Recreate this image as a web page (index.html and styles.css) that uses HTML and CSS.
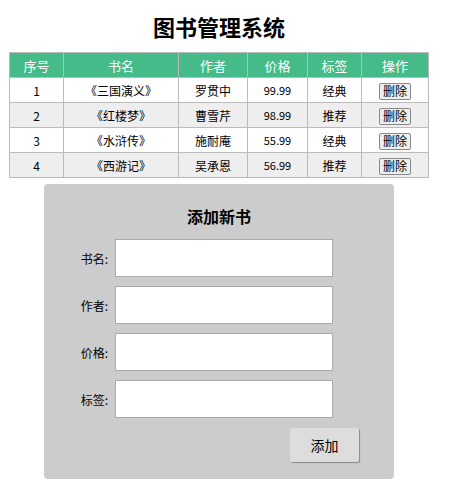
FILE: index.html
```html
<!DOCTYPE html>
<html lang="zh-CN">
<head>
  <meta charset="UTF-8">
  <meta name="viewport" content="width=device-width, initial-scale=1.0">
  <title>图书管理系统</title>
  <link rel="stylesheet" href="styles.css">
</head>
<body>
  <div class="page">
    <h1>图书管理系统</h1>

    <table class="book-table">
      <thead>
        <tr>
          <th>序号</th>
          <th>书名</th>
          <th>作者</th>
          <th>价格</th>
          <th>标签</th>
          <th>操作</th>
        </tr>
      </thead>
      <tbody>
        <tr>
          <td>1</td>
          <td>《三国演义》</td>
          <td>罗贯中</td>
          <td class="price">99.99</td>
          <td>经典</td>
          <td><button class="del-btn">删除</button></td>
        </tr>
        <tr>
          <td>2</td>
          <td>《红楼梦》</td>
          <td>曹雪芹</td>
          <td class="price">98.99</td>
          <td>推荐</td>
          <td><button class="del-btn">删除</button></td>
        </tr>
        <tr>
          <td>3</td>
          <td>《水浒传》</td>
          <td>施耐庵</td>
          <td class="price">55.99</td>
          <td>经典</td>
          <td><button class="del-btn">删除</button></td>
        </tr>
        <tr>
          <td>4</td>
          <td>《西游记》</td>
          <td>吴承恩</td>
          <td class="price">56.99</td>
          <td>推荐</td>
          <td><button class="del-btn">删除</button></td>
        </tr>
      </tbody>
    </table>

    <div class="add-box">
      <h2>添加新书</h2>
      <div class="form-row">
        <label>书名:</label>
        <input type="text">
      </div>
      <div class="form-row">
        <label>作者:</label>
        <input type="text">
      </div>
      <div class="form-row">
        <label>价格:</label>
        <input type="text">
      </div>
      <div class="form-row">
        <label>标签:</label>
        <input type="text">
      </div>
      <div class="form-actions">
        <button class="add-btn">添加</button>
      </div>
    </div>
  </div>
</body>
</html>
```

FILE: styles.css
```css
body {
  margin: 8px;
  font-family: "Noto Sans CJK SC", "Noto Sans", sans-serif;
  color: #000;
  background: #fff;
}

.page {
  width: 420px;
  margin-left: 1px;
}

h1 {
  margin: 0 0 8px;
  font-size: 22px;
  line-height: 36px;
  font-weight: 700;
  text-align: center;
}

/* table */
.book-table {
  width: 420px;
  table-layout: fixed;
  border-collapse: collapse;
  font-size: 12px;
  text-align: center;
}

.book-table th,
.book-table td {
  border: 1px solid #bbb;
  padding: 0;
  height: 24px;
}

.book-table th {
  background: #44bb88;
  color: #fff;
  font-size: 13px;
  font-weight: 400;
}

.book-table th:nth-child(1) { width: 53px; }
.book-table th:nth-child(2) { width: 114px; }
.book-table th:nth-child(3) { width: 68px; }
.book-table th:nth-child(4) { width: 59px; }
.book-table th:nth-child(5) { width: 53px; }

.book-table tbody tr:nth-child(even) {
  background: #eee;
}

.price {
  font-size: 11px;
}

.del-btn {
  font-family: inherit;
  font-size: 12px;
  line-height: 14px;
  height: 17px;
  padding: 0 3px;
  border: 1px solid #888;
  border-radius: 2px;
  background: #eee;
  color: #000;
  vertical-align: middle;
}

/* add form */
.add-box {
  width: 350px;
  height: 295px;
  margin: 6px auto 0;
  padding-top: 20px;
  box-sizing: border-box;
  background: #ccc;
  border-radius: 4px;
}

.add-box h2 {
  margin: 0 0 11px;
  font-size: 16px;
  line-height: 24px;
  text-align: center;
}

.form-row {
  display: flex;
  align-items: center;
  gap: 7px;
  margin-bottom: 9px;
}

.form-row label {
  width: 64px;
  text-align: right;
  font-size: 12px;
}

.form-row input {
  width: 218px;
  height: 38px;
  box-sizing: border-box;
  border: 1px solid #aaa;
  background: #fff;
}

.form-actions {
  display: flex;
  justify-content: flex-end;
  padding-right: 35px;
  margin-top: 10px;
}

.add-btn {
  width: 69px;
  height: 34px;
  font-family: inherit;
  font-size: 14px;
  border: none;
  border-radius: 2px;
  background: #ddd;
  box-shadow: 1px 1px 1px #888;
}
```
